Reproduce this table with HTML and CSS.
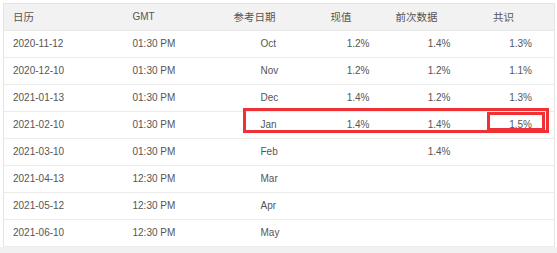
FILE: index.html
```html
<!DOCTYPE html>
<html lang="zh">
<head>
<meta charset="utf-8">
<link rel="stylesheet" href="styles.css">
</head>
<body>
<div class="page">
  <table class="data">
    <colgroup>
      <col class="w1"><col class="w2"><col class="w3"><col class="w4"><col class="w5"><col class="w6">
    </colgroup>
    <thead>
      <tr>
        <th class="l">日历</th>
        <th class="l">GMT</th>
        <th class="h3">参考日期</th>
        <th class="r h4">现值</th>
        <th class="r h5">前次数据</th>
        <th class="r h6">共识</th>
      </tr>
    </thead>
    <tbody>
      <tr><td class="l">2020-11-12</td><td class="l">01:30 PM</td><td class="c3">Oct</td><td class="r">1.2%</td><td class="r">1.4%</td><td class="r v6">1.3%</td></tr>
      <tr><td class="l">2020-12-10</td><td class="l">01:30 PM</td><td class="c3">Nov</td><td class="r">1.2%</td><td class="r">1.2%</td><td class="r v6">1.1%</td></tr>
      <tr><td class="l">2021-01-13</td><td class="l">01:30 PM</td><td class="c3">Dec</td><td class="r">1.4%</td><td class="r">1.2%</td><td class="r v6">1.3%</td></tr>
      <tr><td class="l">2021-02-10</td><td class="l">01:30 PM</td><td class="c3">Jan</td><td class="r">1.4%</td><td class="r">1.4%</td><td class="r v6">1.5%</td></tr>
      <tr><td class="l">2021-03-10</td><td class="l">01:30 PM</td><td class="c3">Feb</td><td class="r"></td><td class="r">1.4%</td><td class="r v6"></td></tr>
      <tr><td class="l">2021-04-13</td><td class="l">12:30 PM</td><td class="c3">Mar</td><td class="r"></td><td class="r"></td><td class="r v6"></td></tr>
      <tr><td class="l">2021-05-12</td><td class="l">12:30 PM</td><td class="c3">Apr</td><td class="r"></td><td class="r"></td><td class="r v6"></td></tr>
      <tr><td class="l">2021-06-10</td><td class="l">12:30 PM</td><td class="c3">May</td><td class="r"></td><td class="r"></td><td class="r v6"></td></tr>
    </tbody>
  </table>
  <div class="mark-row"></div>
  <div class="mark-cell"></div>
  <div class="bottom-strip"></div>
</div>
</body>
</html>
```
FILE: styles.css
```css
html, body {
  margin: 0;
  padding: 0;
  background: #ffffff;
}
body {
  font-family: "Liberation Sans", Arial, "Noto Sans CJK SC", sans-serif;
  font-size: 10px;
  color: #555555;
}
.page {
  position: relative;
  width: 557px;
  height: 253px;
  padding: 3px 0 0 3px;
  box-sizing: border-box;
  overflow: hidden;
}
.data {
  border-collapse: collapse;
  table-layout: fixed;
  width: 551px;
  border: 1px solid #e4e4e4;
}
.w1 { width: 120px; }
.w2 { width: 110px; }
.w3 { width: 52px; }
.w4 { width: 93px; }
.w5 { width: 81px; }
.w6 { width: 95px; }
th, td {
  height: 26px;
  padding: 0;
  border-bottom: 1px solid #ebebeb;
  font-weight: normal;
  white-space: nowrap;
  line-height: 12px;
}
thead th {
  background: #f2f2f2;
  font-family: "Noto Sans CJK SC", "Liberation Sans", sans-serif;
  font-size: 10.5px;
  border-bottom: 1px solid #e8e8e8;
}
thead th:nth-child(2) {
  font-family: "Liberation Sans", Arial, sans-serif;
  font-size: 10px;
}
.l { text-align: left; padding-left: 9px; }
.r { text-align: right; padding-right: 9px; }
.h3 { text-align: left; padding-left: 0; }
.c3 { text-align: left; padding-left: 27px; }
.h4 { padding-right: 27px; }
.h5 { padding-right: 22px; }
.h6 { padding-right: 40px; }
.v6 { padding-right: 22px; }
.mark-row {
  position: absolute;
  left: 243px;
  top: 108px;
  width: 300px;
  height: 19px;
  border: 3px solid #ef3136;
}
.mark-cell {
  position: absolute;
  left: 487px;
  top: 112px;
  width: 52px;
  height: 13px;
  border: 3px solid #ef3136;
}
.bottom-strip {
  position: absolute;
  left: 0;
  right: 0;
  top: 247px;
  height: 6px;
  background: #f1f1f1;
}
```
